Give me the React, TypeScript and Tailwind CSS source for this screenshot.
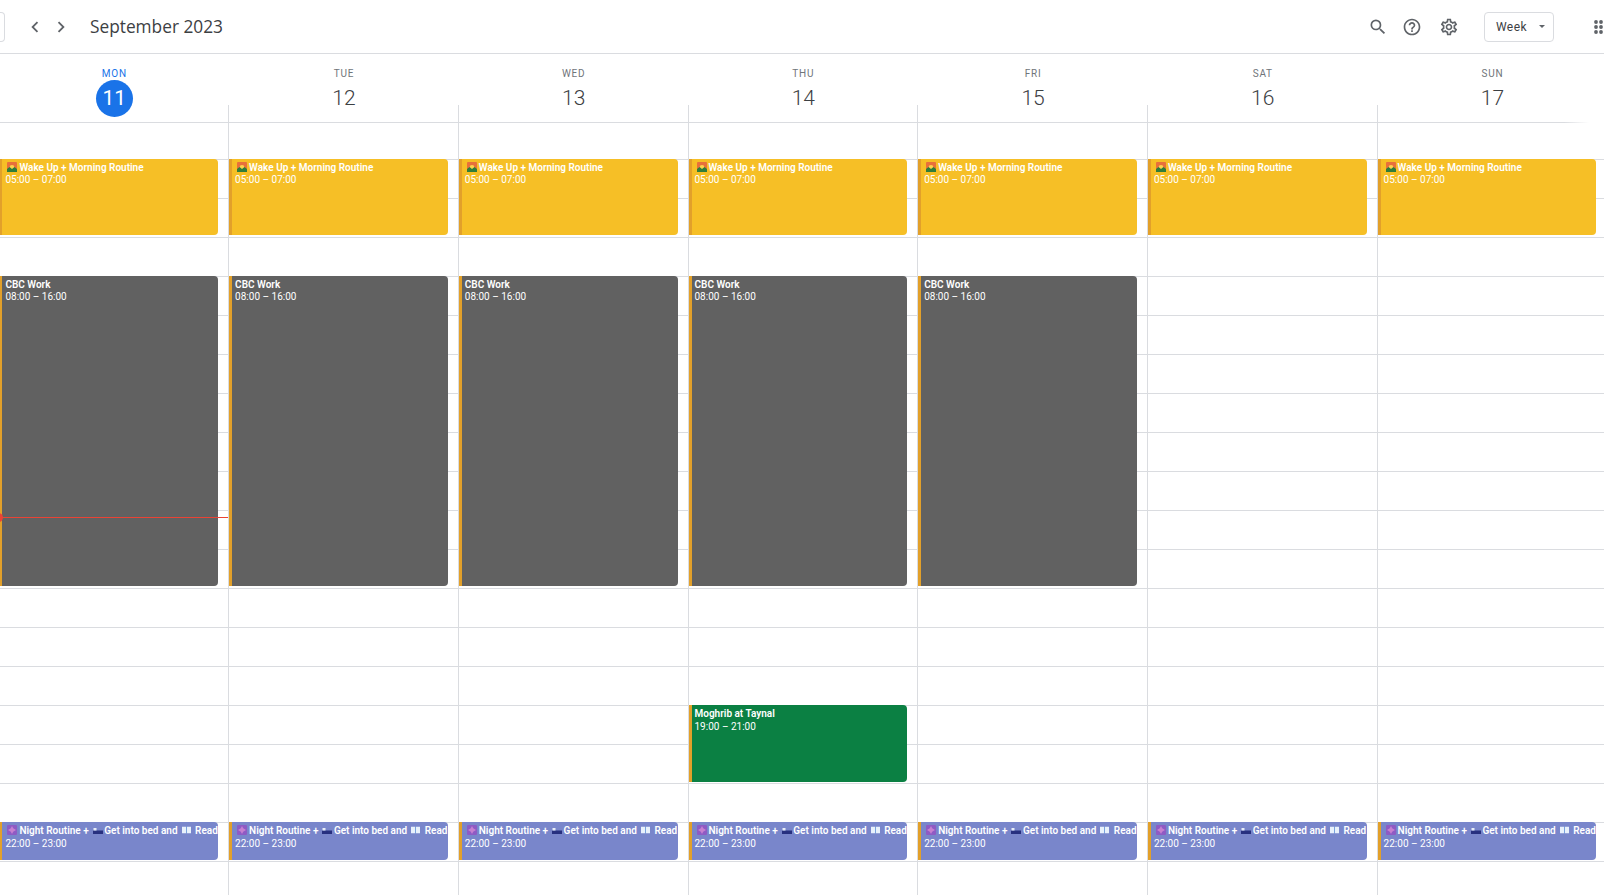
import React from "react";

const days = [
  { label: "MON", date: 11, today: true, work: true },
  { label: "TUE", date: 12, work: true },
  { label: "WED", date: 13, work: true },
  { label: "THU", date: 14, work: true, moghrib: true },
  { label: "FRI", date: 15, work: true },
  { label: "SAT", date: 16 },
  { label: "SUN", date: 17 },
];

const hourRows = Array.from({ length: 19 }, (_, i) => i);

function Icon({ d, size }: { d: string; size: number }) {
  return (
    <svg width={size} height={size} viewBox="0 0 24 24" fill="#5f6368" className="shrink-0">
      <path d={d} />
    </svg>
  );
}

function Sunrise() {
  return (
    <svg width="10" height="10" viewBox="0 0 10 10" className="inline-block align-[-1px] ml-[2px] mr-[2px]">
      <rect width="10" height="10" rx="1" fill="#e8703a" />
      <circle cx="5" cy="5.5" r="2.4" fill="#fbd34d" />
      <path d="M0 10V7l2.5-2L5 7l2.5-2L10 7v3z" fill="#2f7d3b" />
    </svg>
  );
}

function Worship() {
  return (
    <svg width="10" height="10" viewBox="0 0 10 10" className="inline-block align-[-1px] ml-[2px] mr-[2px]">
      <rect width="10" height="10" rx="1" fill="#8e5bc4" />
      <path d="M5 1l1.2 2.3L9 5 6.2 6.7 5 9 3.8 6.7 1 5l2.8-1.7z" fill="#c77fd0" />
    </svg>
  );
}

function Bed() {
  return (
    <svg width="10" height="10" viewBox="0 0 10 10" className="inline-block align-[-1px] ml-[4px] mr-[1.5px]">
      <rect y="5.5" width="10" height="3.5" fill="#27307f" />
      <rect x="0.5" y="3" width="3" height="2.5" fill="#e6ecf7" />
    </svg>
  );
}

function Book() {
  return (
    <svg width="9" height="10" viewBox="0 0 10 10" className="inline-block align-[-1px] ml-[4px] mr-[4.5px]">
      <path d="M0 1.5h4.6v7H0zM5.4 1.5H10v7H5.4z" fill="#e8f1fb" />
      <path d="M4.6 1.5h.8v7h-.8z" fill="#6fa4e0" />
    </svg>
  );
}

function Event({
  className,
  title,
  time,
  timeClass = "",
}: {
  className: string;
  title: React.ReactNode;
  time: string;
  timeClass?: string;
}) {
  return (
    <div
      className={`col-start-1 mr-[10px] rounded-r-[4px] border-l-[3px] border-[#e2a02a] pl-[3px] pt-[3px] text-[10px] leading-[12px] text-white overflow-hidden ${className}`}
    >
      <div className="font-semibold whitespace-nowrap">{title}</div>
      <div className={`whitespace-nowrap ${timeClass}`}>{time}</div>
    </div>
  );
}

function DayHeader({ label, date, today }: { label: string; date: number; today?: boolean }) {
  return (
    <div className="relative flex flex-col items-center pt-[13px] pl-[2px]">
      <div className={`text-[10px] leading-[13px] tracking-[0.8px] ${today ? "text-[#1a73e8]" : "text-[#70757a]"}`}>
        {label}
      </div>
      <div
        className={`w-[37px] h-[37px] rounded-full flex items-center justify-center text-[21px] ${
          today ? "bg-[#1a73e8] text-white" : "font-light text-[#3c4043]"
        }`}
      >
        {date}
      </div>
      <div className="absolute left-0 bottom-0 h-[17px] w-px bg-[#dadce0]" />
    </div>
  );
}

function DayColumn({ work, moghrib, today }: { work?: boolean; moghrib?: boolean; today?: boolean }) {
  return (
    <div className="relative grid border-l border-[#dadce0]">
      <div className="col-start-1 row-start-1 flex flex-col">
        <div className="h-[36px]" />
        {hourRows.map((h) => (
          <div key={h} className="h-[39px] shrink-0 border-t border-[#dadce0]" />
        ))}
      </div>
      <div className="col-start-1 row-start-1 grid grid-rows-[36px_repeat(19,39px)]">
        <Event
          className="row-start-2 row-span-2 mb-[2px] bg-[#f6bf26]"
          title={
            <>
              <Sunrise />
              Wake Up + Morning Routine
            </>
          }
          time="05:00 – 07:00"
        />
        {work && <Event className="row-start-5 row-span-8 mb-[2px] bg-[#616161]" title="CBC Work" time="08:00 – 16:00" />}
        {moghrib && (
          <Event
            className="row-start-16 row-span-2 mb-[1.5px] bg-[#0b8043]"
            timeClass="mt-px"
            title="Moghrib at Taynal"
            time="19:00 – 21:00"
          />
        )}
        <Event
          className="row-start-19 row-span-1 mb-px bg-[#7986cb]"
          timeClass="mt-px"
          title={
            <>
              <Worship />
              Night Routine +
              <Bed />
              Get into bed and
              <Book />
              Read
            </>
          }
          time="22:00 – 23:00"
        />
      </div>
      {today && (
        <div className="absolute left-0 right-0 top-[394px] h-px bg-[#ea4335]">
          <div className="absolute left-[-5px] top-[-4px] w-[9px] h-[9px] rounded-full bg-[#ea4335]" />
        </div>
      )}
    </div>
  );
}

export default function App() {
  return (
    <div className="h-screen overflow-hidden bg-white font-[Roboto,sans-serif]">
      <div className="h-[54px] flex items-center border-b border-[#dadce0]">
        <div className="w-[5px] h-[30px] shrink-0 border border-l-0 border-[#dadce0] rounded-r-[4px]" />
        <div className="ml-[19px] flex items-center gap-[4px]">
          <Icon size={22} d="M15.41 7.41 14 6l-6 6 6 6 1.41-1.41L10.83 12z" />
          <Icon size={22} d="M8.59 16.59 10 18l6-6-6-6-1.41 1.41L13.17 12z" />
        </div>
        <div className="ml-[18px] text-[17.3px] text-[#3c4043] font-['Open_Sans',sans-serif]">September 2023</div>
        <div className="ml-auto -mr-px flex items-center">
          <Icon size={20} d="M15.5 14h-.79l-.28-.27A6.471 6.471 0 0 0 16 9.5 6.5 6.5 0 1 0 9.5 16c1.61 0 3.09-.59 4.23-1.57l.27.28v.79l5 4.99L20.49 19l-4.99-5zm-6 0C7.01 14 5 11.99 5 9.5S7.01 5 9.5 5 14 7.01 14 9.5 11.99 14 9.5 14z" />
          <div className="ml-[14px]">
            <Icon size={20} d="M11 18h2v-2h-2v2zm1-16C6.48 2 2 6.48 2 12s4.48 10 10 10 10-4.48 10-10S17.52 2 12 2zm0 18c-4.41 0-8-3.59-8-8s3.59-8 8-8 8 3.59 8 8-3.59 8-8 8zm0-14c-2.21 0-4 1.79-4 4h2c0-1.1.9-2 2-2s2 .9 2 2c0 2-3 1.75-3 5h2c0-2.25 3-2.5 3-5 0-2.21-1.79-4-4-4z" />
          </div>
          <div className="ml-[17px]">
            <Icon size={20} d="M19.43 12.98c.04-.32.07-.64.07-.98 0-.34-.03-.66-.07-.98l2.11-1.65c.19-.15.24-.42.12-.64l-2-3.46c-.09-.16-.26-.25-.44-.25-.06 0-.12.01-.17.03l-2.49 1c-.52-.4-1.08-.73-1.69-.98l-.38-2.65C14.46 2.18 14.25 2 14 2h-4c-.25 0-.46.18-.49.42l-.38 2.65c-.61.25-1.17.59-1.69.98l-2.49-1c-.06-.02-.12-.03-.18-.03-.17 0-.34.09-.43.25l-2 3.46c-.13.22-.07.49.12.64l2.11 1.65c-.04.32-.07.65-.07.98 0 .33.03.66.07.98l-2.11 1.65c-.19.15-.24.42-.12.64l2 3.46c.09.16.26.25.44.25.06 0 .12-.01.17-.03l2.49-1c.52.4 1.08.73 1.69.98l.38 2.65c.03.24.24.42.49.42h4c.25 0 .46-.18.49-.42l.38-2.65c.61-.25 1.17-.59 1.69-.98l2.49 1c.06.02.12.03.18.03.17 0 .34-.09.43-.25l2-3.46c.12-.22.07-.49-.12-.64l-2.11-1.65zm-1.98-1.71c.04.31.05.52.05.73 0 .21-.02.43-.05.73l-.14 1.13.89.7 1.08.84-.7 1.21-1.27-.51-1.04-.42-.9.68c-.43.32-.84.56-1.25.73l-1.06.43-.16 1.13-.2 1.35h-1.4l-.19-1.35-.16-1.13-1.06-.43c-.43-.18-.83-.41-1.23-.71l-.91-.7-1.06.43-1.27.51-.7-1.21 1.08-.84.89-.7-.14-1.13c-.03-.31-.05-.54-.05-.74s.02-.43.05-.73l.14-1.13-.89-.7-1.08-.84.7-1.21 1.27.51 1.04.42.9-.68c.43-.32.84-.56 1.25-.73l1.06-.43.16-1.13.2-1.35h1.39l.19 1.35.16 1.13 1.06.43c.43.18.83.41 1.23.71l.91.7 1.06-.43 1.27-.51.7 1.21-1.07.85-.89.7.14 1.13zM12 8c-2.21 0-4 1.79-4 4s1.79 4 4 4 4-1.79 4-4-1.79-4-4-4zm0 6c-1.1 0-2-.9-2-2s.9-2 2-2 2 .9 2 2-.9 2-2 2z" />
          </div>
          <div className="ml-[25px] w-[70px] h-[30px] border border-[#dadce0] rounded-[4px] flex items-center pl-[11px] text-[12px] tracking-[0.4px] text-[#3c4043]">
            Week
            <span className="ml-[12px] w-0 h-0 border-x-[3px] border-x-transparent border-t-[3px] border-t-[#5f6368]" />
          </div>
          <svg width="11" height="14" viewBox="0 0 11 14" fill="#5f6368" className="ml-[40px] shrink-0">
            {[2, 7, 12].map((cy) =>
              [2, 7, 12].map((cx) => <circle key={`${cx}-${cy}`} cx={cx} cy={cy} r="1.9" />)
            )}
          </svg>
        </div>
      </div>

      <div className="w-[1607.9px] -ml-[1.6px]">
        <div className="relative grid grid-cols-7 h-[69px] border-b border-[#dadce0]">
          {days.map((d) => (
            <DayHeader key={d.date} label={d.label} date={d.date} today={d.today} />
          ))}
          <div className="absolute left-[1566px] right-0 bottom-[-1px] h-px bg-gradient-to-r from-transparent to-white to-60%" />
        </div>
        <div className="grid grid-cols-7">
          {days.map((d) => (
            <DayColumn key={d.date} work={d.work} moghrib={d.moghrib} today={d.today} />
          ))}
        </div>
      </div>
    </div>
  );
}
